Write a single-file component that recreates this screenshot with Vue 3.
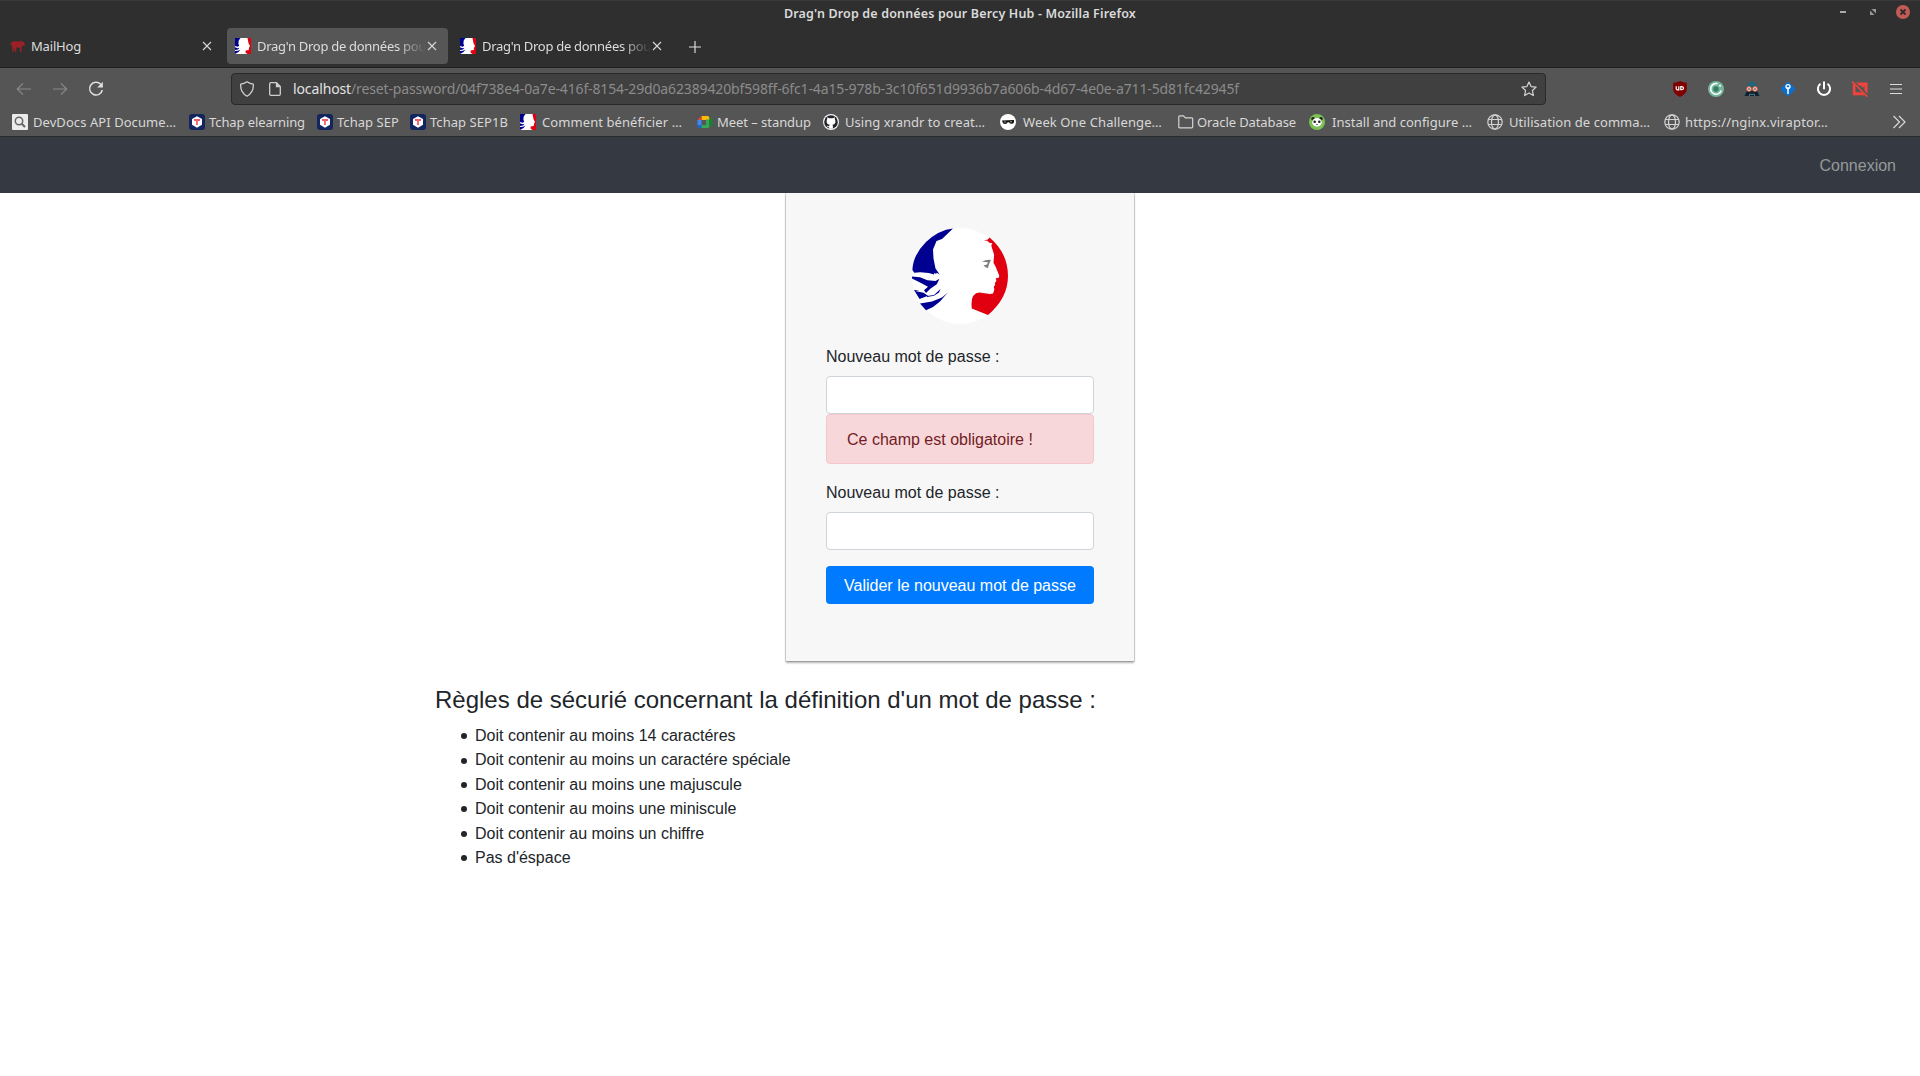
<script setup>
const rules = [
  'Doit contenir au moins 14 caractéres',
  'Doit contenir au moins un caractére spéciale',
  'Doit contenir au moins une majuscule',
  'Doit contenir au moins une miniscule',
  'Doit contenir au moins un chiffre',
  "Pas d'éspace",
]

// w: slot width, g: gap between icon and label, t: label width
const bookmarks = [
  { icon: 'search', label: 'DevDocs API Docume…', w: 177, g: 5, t: 143 },
  { icon: 'tchap', label: 'Tchap elearning', w: 128, g: 4, t: 96 },
  { icon: 'tchap', label: 'Tchap SEP', w: 93, g: 4, t: 62 },
  { icon: 'tchap', label: 'Tchap SEP1B', w: 110, g: 4, t: 78 },
  { icon: 'marianne', label: 'Comment bénéficier …', w: 177, g: 6, t: 140 },
  { icon: 'meet', label: 'Meet – standup', w: 126, g: 4, t: 94 },
  { icon: 'github', label: 'Using xrandr to creat…', w: 177, g: 6, t: 140 },
  { icon: 'mask', label: 'Week One Challenge…', w: 178, g: 7, t: 139 },
  { icon: 'folder', label: 'Oracle Database', w: 131, g: 3, t: 99 },
  { icon: 'panda', label: 'Install and configure …', w: 178, g: 7, t: 140 },
  { icon: 'globe', label: 'Utilisation de comma…', w: 177, g: 6, t: 141 },
  { icon: 'globe', label: 'https://nginx.viraptor…', w: 163, g: 5, t: 143 },
]

// Spread a label's glyphs so that it occupies exactly its slot.
const vFit = {
  mounted(el, { value }) {
    const natural = el.getBoundingClientRect().width
    el.style.letterSpacing = `${(value - natural) / el.textContent.length}px`
  },
}
</script>

<template>
  <div class="screen">
    <svg class="defs" width="0" height="0">
      <symbol id="search" viewBox="0 0 16 16">
        <rect width="16" height="16" rx="1" fill="#ececec" />
        <circle cx="7" cy="7" r="3.7" fill="none" stroke="#666" stroke-width="1.5" />
        <path d="M9.7 9.7l3.3 3.3" stroke="#666" stroke-width="2" />
      </symbol>
      <symbol id="tchap" viewBox="0 0 16 16">
        <rect width="16" height="16" rx="3" fill="#12255e" />
        <path d="M8 2.3l5 2.8v5.6l-5 3-5-3V5.100z" fill="#fff" />
        <path d="M5 6h6M8 6v5" stroke="#f0606c" stroke-width="1.8" />
      </symbol>
      <symbol id="marianne" viewBox="0 0 16 16">
        <rect width="16" height="16" fill="#fff" />
        <path d="M0 0h5.500L3.700 2.500l-.3 3.200.8 2.100L2.700 8.800 0 8z" fill="#000091" />
        <path d="M0 9.300l2.500.9 2-.4-1.500 1.700-3 .6zM0 13l3-.2 2.500-1.300-2 2.500L0 16z" fill="#000091" />
        <path d="M12.500 0H16v16h-3.500l-2-1.500.2-2 3-.5.3-2.200 1-1.700-1.500-2.900z" fill="#e1000f" />
      </symbol>
      <symbol id="meet" viewBox="0 0 16 16">
        <path d="M4.500 2H11l1.300 1.200V6H4.500z" fill="#fbbc04" />
        <path d="M.5 6l4-4v4z" fill="#ea4335" />
        <path d="M.5 6h4v5h-4z" fill="#4285f4" />
        <path d="M.5 11h4v3H2Q.5 14 .5 12.500z" fill="#1967d2" />
        <path d="M4.500 11H9V5.500h3.300V13l-1 1H4.500z" fill="#34a853" />
        <path d="M12 6l3.500-3v10.500L12 10.500z" fill="#188038" />
      </symbol>
      <symbol id="github" viewBox="0 0 16 16">
        <circle cx="8" cy="8" r="8" fill="#f4f4f4" />
        <circle cx="8" cy="8" r="6.800" fill="#20242b" />
        <path d="M4.300 3.300l2 1h3.400l2-1 .2 2.200c1.400 3-.1 5-2.400 5.300l.4 1.200v2.700H6.100v-1.500c-1.700.3-1.900-1-2.600-1.500 1.200-.2 1.500 1 2.600.6l.5-1.500C4.300 10.300 2.800 8.500 4.100 5.500z" fill="#fff" />
      </symbol>
      <symbol id="mask" viewBox="0 0 16 16">
        <circle cx="8" cy="8" r="8" fill="#fff" />
        <path d="M2 6.500l12-.5v2.200q-.8 1.800-3 1.500-1.500 0-2-1.400H7.700q-.7 1.900-2.700 1.800-2-.1-2.500-2z" fill="#111" />
        <path d="M4 8h2M10 7.800h2" stroke="#fff" stroke-width=".6" />
      </symbol>
      <symbol id="folder" viewBox="0 0 16 16">
        <path d="M.8 12.800v-10q0-1 1-1h3.600l2 2h6.300q1 0 1 1v8q0 1-1 1H1.800q-1 0-1-1z" fill="none" stroke="#d4d4d4" stroke-width="1.200" />
      </symbol>
      <symbol id="panda" viewBox="0 0 16 16">
        <circle cx="8" cy="8" r="8" fill="#7cc154" />
        <circle cx="4" cy="4.800" r="1.800" fill="#222" /><circle cx="12" cy="4.800" r="1.800" fill="#222" />
        <ellipse cx="8" cy="8.200" rx="4.800" ry="4.300" fill="#fff" />
        <circle cx="5.700" cy="7.700" r="1.300" fill="#222" /><circle cx="10.300" cy="7.700" r="1.300" fill="#222" />
        <path d="M7 10h2l-1 1.200z" fill="#222" />
      </symbol>
      <symbol id="globe" viewBox="0 0 16 16">
        <g fill="none" stroke="#d4d4d4" stroke-width="1.200">
          <circle cx="8" cy="8" r="7.200" /><ellipse cx="8" cy="8" rx="3.500" ry="7.200" />
          <path d="M1.300 5.500h13.400M1.300 10.500h13.400" />
        </g>
      </symbol>
      <symbol id="cross" viewBox="0 0 10 10">
        <path d="M1 1l8 8M9 1L1 9" stroke="#d8d8d8" stroke-width="1.100" />
      </symbol>
    </svg>

    <header class="titlebar">
      <div class="caption"><span v-fit="352">Drag'n Drop de données pour Bercy Hub - Mozilla Firefox</span></div>
      <div class="window-buttons">
        <svg width="8" height="14" viewBox="0 0 8 14"><path d="M1 7h6" stroke="#aaa" stroke-width="2" /></svg>
        <svg class="restore" width="8" height="14" viewBox="0 0 8 14"><path d="M2.500 4H7v4.500zM1 5.500V10h4.500z" fill="#999" /></svg>
        <svg width="14" height="14" viewBox="0 0 14 14"><circle cx="7" cy="7" r="7" fill="#c15b58" /><path d="M4.500 4.500l5 5M9.500 4.500l-5 5" stroke="#332b2b" stroke-width="1.900" /></svg>
      </div>
    </header>

    <nav class="tabs">
      <div class="tab">
        <svg width="16" height="16" viewBox="0 0 16 16"><path d="M1.500 4.200l2-1 6.500.2 1.300-1 .7 1 2 .6 1 2.500-.6 1.300-2.200.3-.6 1.600.1 4H9.900V9.700L6.500 9.500l-.4 4.300H4.500V10l-.8 1v2.800H2.200V10l-.7-4-.5 2L.300 6z" fill="#9a2125" /></svg>
        <span class="tab-text first"><span v-fit="50">MailHog</span></span>
        <svg width="10" height="10"><use href="#cross" /></svg>
      </div>
      <div v-for="n in 2" :key="n" class="tab" :class="{ active: n === 1 }">
        <svg width="16" height="16"><use href="#marianne" /></svg>
        <span class="tab-text fade"><span v-fit="169">Drag'n Drop de données pou</span></span>
        <svg width="10" height="10"><use href="#cross" /></svg>
      </div>
      <svg class="new-tab" width="12" height="12" viewBox="0 0 12 12"><path d="M6 0v12M0 6h12" stroke="#ddd" stroke-width="1.200" /></svg>
    </nav>

    <div class="toolbar">
      <svg width="16" height="16" viewBox="0 0 16 16"><path d="M15 8H1.500M7 2.300L1.300 8 7 13.700" fill="none" stroke="#898989" stroke-width="1.200" /></svg>
      <svg class="forward" width="16" height="16" viewBox="0 0 16 16"><path d="M1 8h13.500M9 2.300L14.700 8 9 13.700" fill="none" stroke="#898989" stroke-width="1.200" /></svg>
      <svg class="reload" width="16" height="16" viewBox="0 0 16 16"><path d="M12.700 3.300A6.400 6.400 0 1 0 14.300 9" fill="none" stroke="#dedede" stroke-width="1.500" /><path d="M14.900.8V6.500H9.200z" fill="#dedede" /></svg>
      <div class="urlbar">
        <svg width="16" height="16" viewBox="0 0 16 16"><path d="M8 .7q3 2 6.300 2.500.6 8-6.300 12Q1.100 11.200 1.700 3.200 5 2.700 8 .7z" fill="none" stroke="#cfcfcf" stroke-width="1.300" stroke-linejoin="round" /></svg>
        <svg class="doc" width="16" height="16" viewBox="0 0 16 16"><path d="M9.500 1.700H4q-1.300 0-1.300 1.300v10Q2.700 14.300 4 14.300h8q1.300 0 1.300-1.300V5.500zv3.800h3.800" fill="none" stroke="#cfcfcf" stroke-width="1.300" /><path d="M9.500 1.700v3.800h3.800z" fill="#cfcfcf" /></svg>
        <div class="url"><span v-fit="58" class="host">localhost</span><span v-fit="888">/reset-password/04f738e4-0a7e-416f-8154-29d0a62389420bf598ff-6fc1-4a15-978b-3c10f651d9936b7a606b-4d67-4e0e-a711-5d81fc42945f</span></div>
        <svg width="16" height="16" viewBox="0 0 16 16"><path d="M8 1l2.100 4.600 5 .5-3.700 3.400 1 5.100L8 12.100l-4.400 2.500 1-5.100L.9 6.100l5-.5z" fill="none" stroke="#d4d4d4" stroke-width="1.200" stroke-linejoin="round" /></svg>
      </div>
      <div class="extensions">
        <svg width="16" height="16" viewBox="0 0 16 16"><path d="M8 0q3 1.800 6.800 1.800V9Q14 13 8 16 2 13 1.200 9V1.800Q5 1.800 8 0z" fill="#800000" /><path d="M4.200 5.200v2.500q0 1.100 1.300 1.100h1.300V5.200M8.800 5.700h.7q2 0 2 1.500t-2 1.500h-.7z" fill="none" stroke="#fff" stroke-width="1.200" /></svg>
        <svg width="16" height="16" viewBox="0 0 16 16"><circle cx="8" cy="8" r="8" fill="#72b69c" /><path d="M13.200 9.500A5.400 5.400 0 1 1 9.500 2.700" fill="none" stroke="#fff" stroke-width="1.600" /><circle cx="8" cy="8" r="2.700" fill="#397b65" /><circle cx="12" cy="4.800" r="1" fill="#fff" /></svg>
        <svg width="16" height="16" viewBox="0 0 16 16"><path d="M2.500 9Q2.500 .4 8 .4T13.500 9l2.300 6H.2z" fill="#22647a" /><path d="M.5 15l2.500-5h10l2.500 5z" fill="#151f2c" /><g fill="#fff" stroke="#e76345" stroke-width="1.100"><circle cx="5" cy="8" r="2.200" /><circle cx="11" cy="8" r="2.200" /></g><circle cx="5" cy="8" r=".8" /><circle cx="11" cy="8" r=".8" /><path d="M5.500 15v-1.700h5V15" fill="none" stroke="#3b8496" /></svg>
        <svg width="16" height="16" viewBox="0 0 16 16"><rect x="2.600" y="2.600" width="10.800" height="10.800" rx="1" transform="rotate(45 8 8)" fill="#0b6fd0" /><circle cx="8" cy="5.600" r="2" fill="none" stroke="#fff" stroke-width="1.300" /><path d="M8 6V13" stroke="#fff" stroke-width="1.500" /></svg>
        <svg width="16" height="16" viewBox="0 0 16 16"><path d="M4.500 2.800a6.100 6.100 0 1 0 7 0M8 .5v7.800" fill="none" stroke="#fff" stroke-width="2" /></svg>
        <svg width="16" height="16" viewBox="0 0 16 16"><path d="M.8 1.500h14.700v12.800H.8z" fill="#f4433a" /><path d="M3.500 4.700H10v2.200l2.500-2v6.300L10 9.300v2H3.500z" fill="#555" /><path d="M.5 0l15.500 15" stroke="#555" stroke-width="3" /><path d="M.2.500l15.300 15.300" stroke="#f4433a" stroke-width="1.500" /></svg>
        <svg width="16" height="16" viewBox="0 0 16 16"><path d="M2 3.500h12M2 8h12M2 12.500h12" stroke="#ddd" stroke-width="1.200" /></svg>
      </div>
    </div>

    <div class="bookmarks">
      <div v-for="b in bookmarks" :key="b.label" class="bookmark" :style="{ width: b.w + 'px', gap: b.g + 'px' }">
        <svg width="16" height="16"><use :href="'#' + b.icon" /></svg>
        <span v-fit="b.t">{{ b.label }}</span>
      </div>
      <svg class="more" width="14" height="14" viewBox="0 0 14 14"><path d="M1.500 1l6 6-6 6M7 1l6 6-6 6" fill="none" stroke="#d8d8d8" stroke-width="1.200" /></svg>
    </div>

    <nav class="navbar"><a>Connexion</a></nav>

    <main>
      <section class="card">
        <svg class="logo" width="96" height="96" viewBox="0 0 96 96">
          <circle cx="48" cy="48" r="48" fill="#fff" />
          <path d="M41 .6Q27 2 14 14 1 27 .4 42l1.800 2.700 6-.5 8.500.8 5.300 1.500.5-1.700 1.500 1.200.7-1.200 3 1.700-4.200-6-2-10-.5-9 3.500-8.500L30 11z" fill="#000091" />
          <path d="M0 48.500l8 .8 7.500 3 8 .8 4-2.300-2.700 5.500-6.500 4.500-4.300 4.200-2-2.700 4-3.500-8-4.300L0 50.500zM2 62l5.500.3-4.300.8 8.300 1.600 4.500 3-8.500 3.300zM15 68l7-1 6.500-6-1.500 3.500-5 3.300-7 1.200zM8 75.500l12-2 10-4 5.800-5L28 73.500 21 79l-7 3.200z" fill="#000091" />
          <path d="M77.500 9.500Q96 25 96 48 96 70 76 87L59.800 80.500Q58 65 67.500 64.500l10.500 1.600 3-.5 1.300-3.800-.5-3.400 1.400-1.400-.4-2 1.600-2-.7-2.400 3.300-1.200.2-2-3.700-9-2-3.600.6-8-2.500-8-.2-2.100 1-1.400-3.100-.5-2-2-3.500-.4 4-1z" fill="#e1000f" />
          <path d="M70 33.500q5-2.200 9-1.500l-2 4-1 4-2-.4-2.500-2 3.500-1 1-2.400-3-.3z" fill="#7d7d7d" />
        </svg>
        <label>Nouveau mot de passe :</label>
        <input type="password">
        <div class="alert">Ce champ est obligatoire !</div>
        <label>Nouveau mot de passe :</label>
        <input type="password">
        <button>Valider le nouveau mot de passe</button>
      </section>
      <section class="rules">
        <h4>Règles de sécurié concernant la définition d'un mot de passe :</h4>
        <ul>
          <li v-for="r in rules" :key="r">{{ r }}</li>
        </ul>
      </section>
    </main>
  </div>
</template>

<style>
html, body { margin: 0; overflow: hidden; background: #fff; }
</style>

<style scoped>
* { box-sizing: border-box; }
.screen { width: 1920px; height: 1076px; overflow: hidden; background: #fff; font: 13px/18px "Noto Sans", sans-serif; color: #d8d8d8; }
.defs { position: absolute; }
svg { display: block; flex: none; }
span { white-space: nowrap; }
.titlebar { display: flex; height: 28px; background: #2f2f2f; border-top: 1px solid #3a3a3a; }
.caption { flex: 1; padding: 4px 0 0 784px; font-size: 12.5px; font-weight: 600; color: #dadada; }
.window-buttons { display: flex; gap: 22px; padding: 4px 10px 0 0; }
.restore { margin-right: -3px; }
.tabs { display: flex; height: 40px; background: #2f2f2f; border-bottom: 1px solid #202020; padding-left: 2px; gap: 4px; }
.tab { display: flex; align-items: center; width: 221px; height: 36px; padding: 0 11px 0 8px; border-radius: 4px; }
.tab.active { background: #565656; }
.tab-text { flex: 1; margin-left: 6px; min-width: 0; color: #dcdcdc; }
.tab-text.first { margin-left: 5px; }
.tab-text.fade { -webkit-mask-image: linear-gradient(90deg, #000 140px, transparent 169px); mask-image: linear-gradient(90deg, #000 140px, transparent 169px); }
.new-tab { margin: 13px 0 0 12px; }
.toolbar { display: flex; align-items: center; height: 41px; background: #555; padding: 0 16px; }
.forward { margin-left: 20px; }
.reload { margin-left: 20px; }
.urlbar { display: flex; align-items: center; width: 1315px; height: 32px; margin-left: 127px; padding: 0 8px 0 7px; background: #404040; border: 1px solid #292929; border-radius: 4px; }
.doc { margin-left: 12px; }
.url { flex: 1; margin-left: 10px; font-size: 14px; color: #8b8b8b; white-space: nowrap; }
.host { color: #e2e2e2; }
.extensions { display: flex; gap: 20px; margin-left: auto; }
.bookmarks { display: flex; align-items: center; height: 28px; padding: 0 0 1px 12px; background: #555; border-bottom: 1px solid #292c2e; }
.bookmark { display: flex; align-items: center; flex: none; height: 26px; }
.more { margin-left: 65px; }
.navbar { display: flex; justify-content: flex-end; align-items: center; height: 56px; padding: 2px 24px 0 0; background: #353941; color: #96999c; font: 16px/24px "Liberation Sans", Arial, sans-serif; }
main { font: 16px/24px "Liberation Sans", Arial, sans-serif; color: #212529; }
.card { width: 348px; height: 468px; margin: 0 auto; padding: 35px 40px 0; background: #f7f7f7; box-shadow: 0 2px 2px rgba(0, 0, 0, .3), 0 0 0 1px rgba(0, 0, 0, .1), 0 0 2px rgba(0, 0, 0, .1); clip-path: inset(0 -5px -6px); }
.logo { margin: 0 auto 20px; }
label { display: block; height: 24px; margin-bottom: 8px; padding-top: 1px; }
input { display: block; width: 268px; height: 38px; border: 1px solid #ced4da; border-radius: 4px; background: #fff; }
.alert { height: 50px; margin-bottom: 16px; padding: 13px 20px 0; border: 1px solid #f5c6cb; border-radius: 4px; background: #f8d7da; color: #721c24; }
button { display: block; width: 268px; height: 38px; margin-top: 16px; padding: 2px 0 0; border: 0; border-radius: 4px; background: #007bff; color: #fff; font: inherit; }
.rules { width: 1050px; margin: 24px auto 0; }
h4 { margin: 0 0 10px; font-size: 24px; font-weight: 400; line-height: 29px; }
ul { margin: 0; padding-left: 26px; list-style: none; line-height: 24.4px; }
li { display: flex; align-items: center; gap: 8px; }
li::before { content: ""; width: 6px; height: 6px; border-radius: 50%; background: #212529; }
</style>
